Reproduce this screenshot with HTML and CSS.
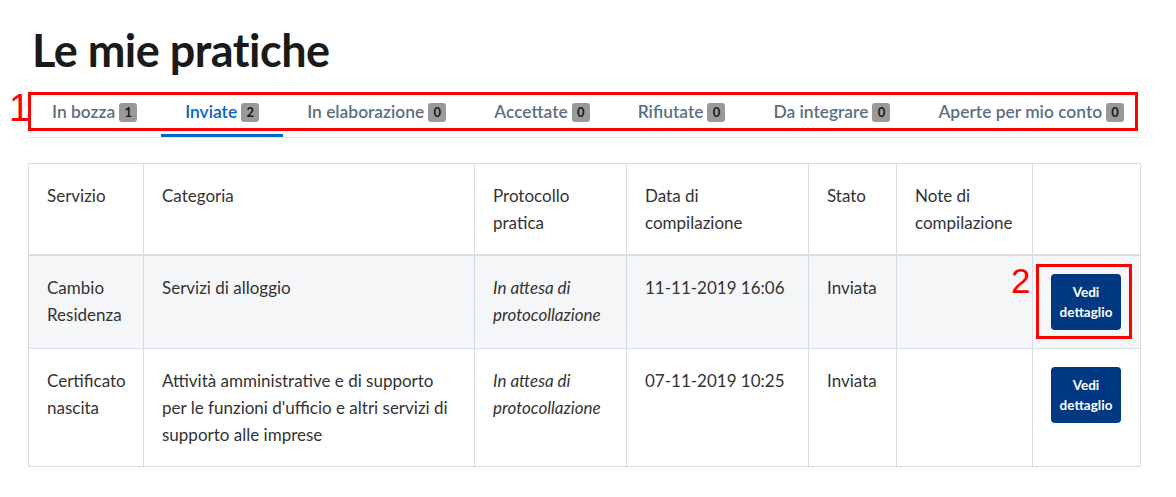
FILE: index.html
```html
<!DOCTYPE html>
<html lang="it">
<head>
<meta charset="utf-8">
<title>Le mie pratiche</title>
<link rel="stylesheet" href="styles.css">
</head>
<body>
<div class="page">
  <h1 class="title">Le mie pratiche</h1>
  <nav class="tabs-wrap">
    <ul class="tabs">
      <li class="tab"><span>In bozza</span><span class="badge">1</span></li>
      <li class="tab active"><span>Inviate</span><span class="badge">2</span></li>
      <li class="tab"><span>In elaborazione</span><span class="badge">0</span></li>
      <li class="tab"><span>Accettate</span><span class="badge">0</span></li>
      <li class="tab"><span>Rifiutate</span><span class="badge">0</span></li>
      <li class="tab"><span>Da integrare</span><span class="badge">0</span></li>
      <li class="tab"><span>Aperte per mio conto</span><span class="badge">0</span></li>
    </ul>
    <div class="mark mark-1"><span class="mark-num">1</span></div>
  </nav>
  <table class="grid">
    <colgroup>
      <col style="width:115px"><col style="width:331px"><col style="width:152px"><col style="width:182px"><col style="width:88px"><col style="width:136px"><col style="width:108px">
    </colgroup>
    <thead>
      <tr>
        <th>Servizio</th><th>Categoria</th><th>Protocollo pratica</th><th>Data di compilazione</th><th>Stato</th><th>Note di compilazione</th><th></th>
      </tr>
    </thead>
    <tbody>
      <tr class="striped">
        <td>Cambio Residenza</td><td>Servizi di alloggio</td><td><em>In attesa di protocollazione</em></td><td>11-11-2019 16:06</td><td>Inviata</td><td></td>
        <td class="act"><div class="btn-holder"><button class="btn">Vedi dettaglio</button><div class="mark mark-2"><span class="mark-num">2</span></div></div></td>
      </tr>
      <tr>
        <td>Certificato nascita</td><td>Attività amministrative e di supporto per le funzioni d'ufficio e altri servizi di supporto alle imprese</td><td><em>In attesa di protocollazione</em></td><td>07-11-2019 10:25</td><td>Inviata</td><td></td>
        <td class="act"><div class="btn-holder"><button class="btn">Vedi dettaglio</button></div></td>
      </tr>
    </tbody>
  </table>
</div>
</body>
</html>
```
FILE: styles.css
```css
html, body { margin: 0; padding: 0; background: #fff; }
body { font-family: Lato, "Noto Sans", sans-serif; color: #19191a; }
.page { padding: 20px 36px 0 28px; width: 1112px; }
.title { margin: 0 0 0 4px; font-size: 45px; font-weight: 700; line-height: 60px; color: #1a1a1a; letter-spacing: -0.5px; }
.tabs-wrap { position: relative; margin-top: 10px; border-bottom: 1px solid #dbe4ef; }
.tabs { list-style: none; margin: 0; padding: 0; display: flex; white-space: nowrap; }
.tab { display: flex; align-items: center; gap: 4px; padding: 10px 24px 10px; font-size: 17.4px; font-weight: 600; color: #5c6f82; line-height: 24px; border-bottom: 3px solid transparent; }
.tab.active { color: #0066cc; border-bottom-color: #0066cc; }
.badge { display: inline-block; box-sizing: border-box; min-width: 18px; height: 19px; padding: 0 4px; line-height: 19px; background: #999; color: #1a1a1a; border-radius: 3px; font-size: 13px; font-weight: 700; text-align: center; }
.mark { position: absolute; border: 3px solid #ff0000; box-sizing: border-box; }
.mark-num { position: absolute; color: #ff0000; font-family: "Liberation Sans", sans-serif; font-weight: 400; line-height: 1; }
.mark-1 { left: 0; top: 2px; width: 1110px; height: 39px; }
.mark-1 .mark-num { left: -22px; top: -6px; font-size: 38px; }
.grid { margin-top: 25px; border-collapse: collapse; table-layout: fixed; width: 1112px; font-size: 17px; line-height: 27px; color: #333; }
.grid th, .grid td { border: 1px solid #d9dee5; padding: 18px; text-align: left; vertical-align: top; font-weight: 400; }
.grid thead th { border-bottom: 2px solid #d9dee5; }
.grid tr.striped td { background: #f5f6f8; }
.grid em { font-style: italic; }
.btn-holder { position: relative; }
.btn { display: block; width: 70px; height: 56px; background: #003882; color: #fff; border: 0; border-radius: 4px; font-family: Lato, sans-serif; font-size: 13.5px; font-weight: 700; line-height: 20px; padding: 0 6px; }
.mark-2 { left: -15px; top: -10px; width: 96px; height: 75px; }
.mark-2 .mark-num { left: -28px; top: -4px; font-size: 35px; }
```
